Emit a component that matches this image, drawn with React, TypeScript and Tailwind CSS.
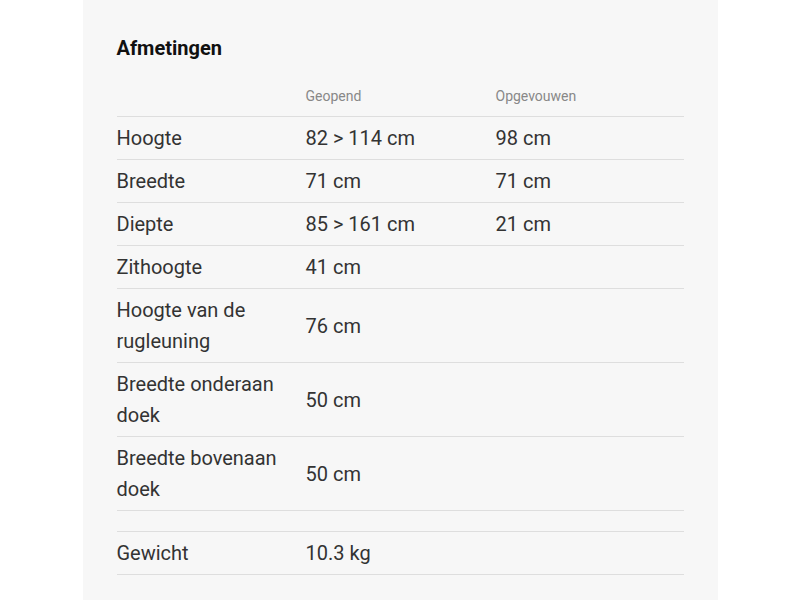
const rows: { label: string; open: string; folded?: string }[] = [
  { label: 'Hoogte', open: '82 > 114 cm', folded: '98 cm' },
  { label: 'Breedte', open: '71 cm', folded: '71 cm' },
  { label: 'Diepte', open: '85 > 161 cm', folded: '21 cm' },
  { label: 'Zithoogte', open: '41 cm' },
  { label: 'Hoogte van de rugleuning', open: '76 cm' },
  { label: 'Breedte onderaan doek', open: '50 cm' },
  { label: 'Breedte bovenaan doek', open: '50 cm' },
]

function Row({ label, open, folded }: { label: string; open: string; folded?: string }) {
  return (
    <div className="grid grid-cols-[189px_190px_1fr] items-center border-b border-[#dedede] pt-[6px] pb-[5px] text-[20px] leading-[31px] text-[#333]">
      <div className="pr-3">{label}</div>
      <div>{open}</div>
      <div>{folded ?? ''}</div>
    </div>
  )
}

export default function App() {
  return (
    <div className="min-h-[600px] bg-white" style={{ fontFamily: 'Roboto, "Noto Sans", sans-serif' }}>
      <div className="mx-auto w-[635px] min-h-[600px] bg-[#f7f7f7] px-[34px] pt-[34px]">
        <h2 className="text-[20px] font-bold leading-[28px] text-[#111]">Afmetingen</h2>

        {/* header */}
        <div className="mt-[24px] grid grid-cols-[189px_190px_1fr] border-b border-[#dedede] pb-[10px] text-[14px] leading-[20px] text-[#888]">
          <div />
          <div>Geopend</div>
          <div>Opgevouwen</div>
        </div>

        {rows.map((r) => (
          <Row key={r.label} {...r} />
        ))}

        {/* spacer row */}
        <div className="mt-px h-[20px] border-b border-[#dedede]" />

        <div className="pb-px">
          <Row label="Gewicht" open="10.3 kg" />
        </div>
      </div>
    </div>
  )
}
